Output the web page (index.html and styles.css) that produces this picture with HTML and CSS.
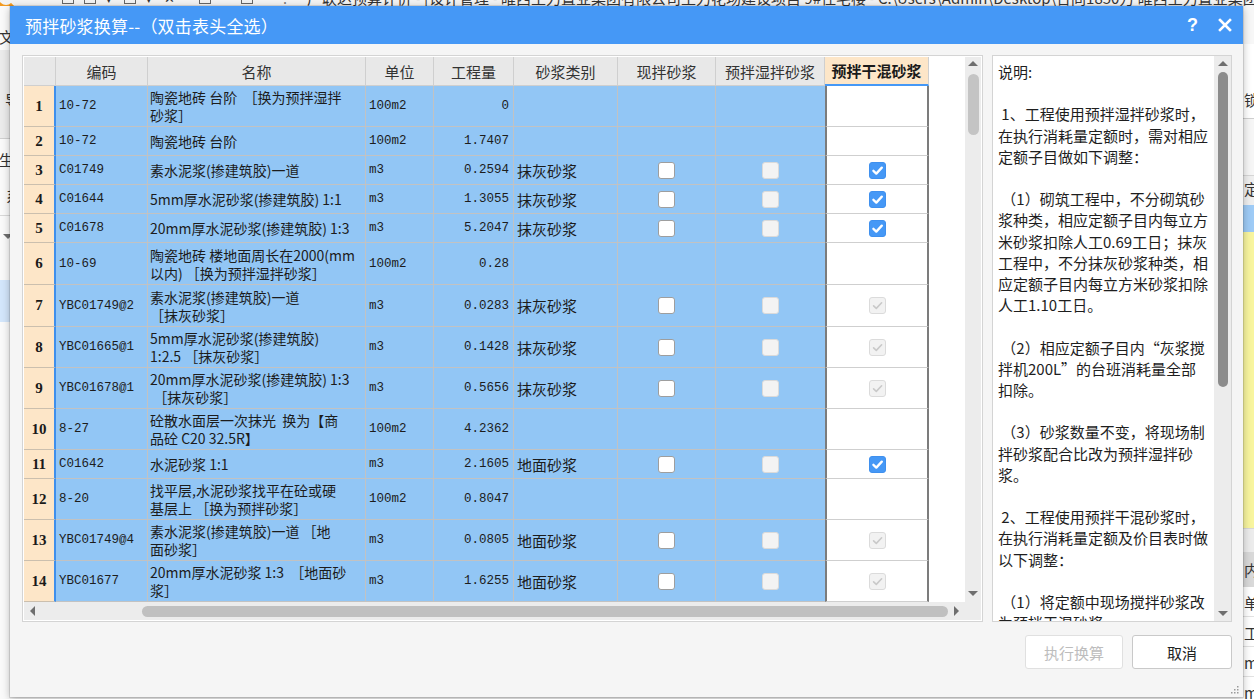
FILE: index.html
```html
<!DOCTYPE html>
<html lang="zh-CN">
<head>
<meta charset="utf-8">
<title>预拌砂浆换算</title>
<link rel="stylesheet" href="styles.css">
</head>
<body>
<div class="app">
  <div class="app-top">
    <span class="logo"></span>
    <span class="tico sq"></span>
    <span class="tico sq"></span><span class="tdrop">▾</span>
    <span class="tico sq"></span><span class="tdrop">▾</span>
    <span class="tx">✕</span>
    <span class="tico sq2"></span>
    <span class="tico sq2"></span>
    <span class="tdots">⁝</span>
    <span class="apptitle">广联达预算计价 - [设计管理 - 睢西生力置业集团有限公司生力花场建设项目 9#住宅楼 - C:\Users\Admin\Desktop\合同1850万 睢西生力置业集团有限公司]</span>
  </div>
  <div class="app-left">
    <div class="al al-a">文</div>
    <div class="al al-b">导</div>
    <div class="al al-c">生</div>
    <div class="al al-d">系</div>
    <div class="al al-e"><span class="tri-down"></span></div>
    <div class="al al-f"></div>
    <div class="al al-g"></div>
  </div>
  <div class="app-right">
    <div class="ar ar-a"></div>
    <div class="ar ar-b">锁</div>
    <div class="ar ar-c"></div>
    <div class="ar ar-d">定</div>
    <div class="ar ar-e"></div>
    <div class="ar ar-f"></div>
    <div class="ar ar-g"></div>
    <div class="ar ar-h">内</div>
    <div class="ar ar-i">单</div>
    <div class="ar ar-i">工</div>
    <div class="ar ar-i">m</div>
    <div class="ar ar-i">m</div>
  </div>
</div>

<div class="dialog">
  <div class="titlebar">
    <span class="title">预拌砂浆换算--（双击表头全选）</span>
    <span class="tb-btns">
      <span class="help">?</span>
      <svg class="close" width="14" height="14" viewBox="0 0 14 14"><path d="M2 2 L12 12 M12 2 L2 12" stroke="#fff" stroke-width="2.6" stroke-linecap="square" fill="none"/></svg>
    </span>
  </div>
  <div class="body">
    <div class="main">
      <div class="gridpanel">
        <div class="grid-top">
          <div class="viewport">
            <div class="rows">
              <div class="row hrow">
                <div class="cell h w-rn"></div>
                <div class="cell h w-code">编码</div>
                <div class="cell h w-name">名称</div>
                <div class="cell h w-unit">单位</div>
                <div class="cell h w-qty">工程量</div>
                <div class="cell h w-type">砂浆类别</div>
                <div class="cell h w-xb">现拌砂浆</div>
                <div class="cell h w-sb">预拌湿拌砂浆</div>
                <div class="cell h w-gh hsel">预拌干混砂浆</div>
              </div>

              <div class="row r2">
                <div class="cell rn">1</div>
                <div class="cell code">10-72</div>
                <div class="cell name"><div class="t">陶瓷地砖 台阶 &nbsp;［换为预拌湿拌<br>砂浆］</div></div>
                <div class="cell unit">100m2</div>
                <div class="cell qty">0</div>
                <div class="cell type"></div>
                <div class="cell xb"></div>
                <div class="cell sb"></div>
                <div class="cell gh"></div>
              </div>

              <div class="row r1">
                <div class="cell rn">2</div>
                <div class="cell code">10-72</div>
                <div class="cell name"><div class="t">陶瓷地砖 台阶</div></div>
                <div class="cell unit">100m2</div>
                <div class="cell qty">1.7407</div>
                <div class="cell type"></div>
                <div class="cell xb"></div>
                <div class="cell sb"></div>
                <div class="cell gh"></div>
              </div>

              <div class="row r1">
                <div class="cell rn">3</div>
                <div class="cell code">C01749</div>
                <div class="cell name"><div class="t">素水泥浆(掺建筑胶)一道</div></div>
                <div class="cell unit">m3</div>
                <div class="cell qty">0.2594</div>
                <div class="cell type">抹灰砂浆</div>
                <div class="cell xb"><span class="cb"></span></div>
                <div class="cell sb"><span class="cb dis"></span></div>
                <div class="cell gh"><span class="cb on"><svg width="15" height="15" viewBox="0 0 15 15"><path d="M3.4 7.8 L6.3 10.6 L11.8 4.6" stroke="#fff" stroke-width="2.3" fill="none" stroke-linecap="round" stroke-linejoin="round"/></svg></span></div>
              </div>

              <div class="row r1">
                <div class="cell rn">4</div>
                <div class="cell code">C01644</div>
                <div class="cell name"><div class="t">5mm厚水泥砂浆(掺建筑胶) 1:1</div></div>
                <div class="cell unit">m3</div>
                <div class="cell qty">1.3055</div>
                <div class="cell type">抹灰砂浆</div>
                <div class="cell xb"><span class="cb"></span></div>
                <div class="cell sb"><span class="cb dis"></span></div>
                <div class="cell gh"><span class="cb on"><svg width="15" height="15" viewBox="0 0 15 15"><path d="M3.4 7.8 L6.3 10.6 L11.8 4.6" stroke="#fff" stroke-width="2.3" fill="none" stroke-linecap="round" stroke-linejoin="round"/></svg></span></div>
              </div>

              <div class="row r1">
                <div class="cell rn">5</div>
                <div class="cell code">C01678</div>
                <div class="cell name"><div class="t">20mm厚水泥砂浆(掺建筑胶) 1:3</div></div>
                <div class="cell unit">m3</div>
                <div class="cell qty">5.2047</div>
                <div class="cell type">抹灰砂浆</div>
                <div class="cell xb"><span class="cb"></span></div>
                <div class="cell sb"><span class="cb dis"></span></div>
                <div class="cell gh"><span class="cb on"><svg width="15" height="15" viewBox="0 0 15 15"><path d="M3.4 7.8 L6.3 10.6 L11.8 4.6" stroke="#fff" stroke-width="2.3" fill="none" stroke-linecap="round" stroke-linejoin="round"/></svg></span></div>
              </div>

              <div class="row r2b">
                <div class="cell rn">6</div>
                <div class="cell code">10-69</div>
                <div class="cell name"><div class="t">陶瓷地砖 楼地面周长在2000(mm<br>以内) ［换为预拌湿拌砂浆］</div></div>
                <div class="cell unit">100m2</div>
                <div class="cell qty">0.28</div>
                <div class="cell type"></div>
                <div class="cell xb"></div>
                <div class="cell sb"></div>
                <div class="cell gh"></div>
              </div>

              <div class="row r2b">
                <div class="cell rn">7</div>
                <div class="cell code">YBC01749@2</div>
                <div class="cell name"><div class="t">素水泥浆(掺建筑胶)一道<br> ［抹灰砂浆］</div></div>
                <div class="cell unit">m3</div>
                <div class="cell qty">0.0283</div>
                <div class="cell type">抹灰砂浆</div>
                <div class="cell xb"><span class="cb"></span></div>
                <div class="cell sb"><span class="cb dis"></span></div>
                <div class="cell gh"><span class="cb ond"><svg width="15" height="15" viewBox="0 0 15 15"><path d="M3.6 7.8 L6.3 10.4 L11.6 4.8" stroke="#c9c9c9" stroke-width="1.6" fill="none" stroke-linecap="round" stroke-linejoin="round"/></svg></span></div>
              </div>

              <div class="row r2">
                <div class="cell rn">8</div>
                <div class="cell code">YBC01665@1</div>
                <div class="cell name"><div class="t">5mm厚水泥砂浆(掺建筑胶)<br>1:2.5 ［抹灰砂浆］</div></div>
                <div class="cell unit">m3</div>
                <div class="cell qty">0.1428</div>
                <div class="cell type">抹灰砂浆</div>
                <div class="cell xb"><span class="cb"></span></div>
                <div class="cell sb"><span class="cb dis"></span></div>
                <div class="cell gh"><span class="cb ond"><svg width="15" height="15" viewBox="0 0 15 15"><path d="M3.6 7.8 L6.3 10.4 L11.6 4.8" stroke="#c9c9c9" stroke-width="1.6" fill="none" stroke-linecap="round" stroke-linejoin="round"/></svg></span></div>
              </div>

              <div class="row r2">
                <div class="cell rn">9</div>
                <div class="cell code">YBC01678@1</div>
                <div class="cell name"><div class="t">20mm厚水泥砂浆(掺建筑胶) 1:3<br> &nbsp;［抹灰砂浆］</div></div>
                <div class="cell unit">m3</div>
                <div class="cell qty">0.5656</div>
                <div class="cell type">抹灰砂浆</div>
                <div class="cell xb"><span class="cb"></span></div>
                <div class="cell sb"><span class="cb dis"></span></div>
                <div class="cell gh"><span class="cb ond"><svg width="15" height="15" viewBox="0 0 15 15"><path d="M3.6 7.8 L6.3 10.4 L11.6 4.8" stroke="#c9c9c9" stroke-width="1.6" fill="none" stroke-linecap="round" stroke-linejoin="round"/></svg></span></div>
              </div>

              <div class="row r2">
                <div class="cell rn">10</div>
                <div class="cell code">8-27</div>
                <div class="cell name"><div class="t">砼散水面层一次抹光 &nbsp;换为【商<br>品砼 C20 32.5R】</div></div>
                <div class="cell unit">100m2</div>
                <div class="cell qty">4.2362</div>
                <div class="cell type"></div>
                <div class="cell xb"></div>
                <div class="cell sb"></div>
                <div class="cell gh"></div>
              </div>

              <div class="row r1">
                <div class="cell rn">11</div>
                <div class="cell code">C01642</div>
                <div class="cell name"><div class="t">水泥砂浆 1:1</div></div>
                <div class="cell unit">m3</div>
                <div class="cell qty">2.1605</div>
                <div class="cell type">地面砂浆</div>
                <div class="cell xb"><span class="cb"></span></div>
                <div class="cell sb"><span class="cb dis"></span></div>
                <div class="cell gh"><span class="cb on"><svg width="15" height="15" viewBox="0 0 15 15"><path d="M3.4 7.8 L6.3 10.6 L11.8 4.6" stroke="#fff" stroke-width="2.3" fill="none" stroke-linecap="round" stroke-linejoin="round"/></svg></span></div>
              </div>

              <div class="row r2">
                <div class="cell rn">12</div>
                <div class="cell code">8-20</div>
                <div class="cell name"><div class="t">找平层,水泥砂浆找平在砼或硬<br>基层上 ［换为预拌砂浆］</div></div>
                <div class="cell unit">100m2</div>
                <div class="cell qty">0.8047</div>
                <div class="cell type"></div>
                <div class="cell xb"></div>
                <div class="cell sb"></div>
                <div class="cell gh"></div>
              </div>

              <div class="row r2">
                <div class="cell rn">13</div>
                <div class="cell code">YBC01749@4</div>
                <div class="cell name"><div class="t">素水泥浆(掺建筑胶)一道 ［地<br>面砂浆］</div></div>
                <div class="cell unit">m3</div>
                <div class="cell qty">0.0805</div>
                <div class="cell type">地面砂浆</div>
                <div class="cell xb"><span class="cb"></span></div>
                <div class="cell sb"><span class="cb dis"></span></div>
                <div class="cell gh"><span class="cb ond"><svg width="15" height="15" viewBox="0 0 15 15"><path d="M3.6 7.8 L6.3 10.4 L11.6 4.8" stroke="#c9c9c9" stroke-width="1.6" fill="none" stroke-linecap="round" stroke-linejoin="round"/></svg></span></div>
              </div>

              <div class="row r2">
                <div class="cell rn">14</div>
                <div class="cell code">YBC01677</div>
                <div class="cell name"><div class="t">20mm厚水泥砂浆 1:3 &nbsp;［地面砂<br>浆］</div></div>
                <div class="cell unit">m3</div>
                <div class="cell qty">1.6255</div>
                <div class="cell type">地面砂浆</div>
                <div class="cell xb"><span class="cb"></span></div>
                <div class="cell sb"><span class="cb dis"></span></div>
                <div class="cell gh"><span class="cb ond"><svg width="15" height="15" viewBox="0 0 15 15"><path d="M3.6 7.8 L6.3 10.4 L11.6 4.8" stroke="#c9c9c9" stroke-width="1.6" fill="none" stroke-linecap="round" stroke-linejoin="round"/></svg></span></div>
              </div>
            </div>
          </div>
          <div class="vscroll">
            <div class="arrow-box ab-v"><span class="tri-up"></span></div>
            <div class="thumb-v"></div>
            <div class="spacer"></div>
            <div class="arrow-box ab-v"><span class="tri-down"></span></div>
          </div>
        </div>
        <div class="grid-bottom">
          <div class="hscroll">
            <div class="arrow-box ab-h"><span class="tri-left"></span></div>
            <div class="thumb-h"></div>
            <div class="arrow-box ab-h"><span class="tri-right"></span></div>
          </div>
          <div class="corner"></div>
        </div>
      </div>

      <div class="desc">
        <div class="desc-text">说明:

 1、工程使用预拌湿拌砂浆时，
在执行消耗量定额时，需对相应
定额子目做如下调整：

 （1）砌筑工程中，不分砌筑砂
浆种类，相应定额子目内每立方
米砂浆扣除人工0.69工日；抹灰
工程中，不分抹灰砂浆种类，相
应定额子目内每立方米砂浆扣除
人工1.10工日。

 （2）相应定额子目内“灰浆搅
拌机200L”的台班消耗量全部
扣除。

 （3）砂浆数量不变，将现场制
拌砂浆配合比改为预拌湿拌砂
浆。

 2、工程使用预拌干混砂浆时，
在执行消耗量定额及价目表时做
以下调整：

 （1）将定额中现场搅拌砂浆改
为预拌干混砂浆。</div>
        <div class="dscroll">
          <div class="arrow-box ab-d"><span class="tri-up"></span></div>
          <div class="thumb-d"></div>
          <div class="spacer"></div>
          <div class="arrow-box ab-d"><span class="tri-down"></span></div>
        </div>
      </div>
    </div>
    <div class="buttons">
      <button class="btn" disabled>执行换算</button>
      <button class="btn">取消</button>
    </div>
  </div>
  <svg class="grip" width="9" height="9" viewBox="0 0 9 9">
    <rect x="7" y="1" width="1.5" height="1.5" fill="#9a9a9a"/>
    <rect x="4" y="4" width="1.5" height="1.5" fill="#9a9a9a"/>
    <rect x="7" y="4" width="1.5" height="1.5" fill="#9a9a9a"/>
    <rect x="1" y="7" width="1.5" height="1.5" fill="#9a9a9a"/>
    <rect x="4" y="7" width="1.5" height="1.5" fill="#9a9a9a"/>
    <rect x="7" y="7" width="1.5" height="1.5" fill="#9a9a9a"/>
  </svg>
</div>
</body>
</html>
```

FILE: styles.css
```css
* { box-sizing: border-box; }
html, body { margin: 0; padding: 0; }
body {
  width: 1254px;
  height: 699px;
  overflow: hidden;
  position: relative;
  background: #f4f4f4;
  font-family: "Noto Sans CJK SC", "Noto Sans", sans-serif;
  color: #222;
}

/* ---------- background application window ---------- */
.app { position: absolute; left: 0; top: 0; right: 0; bottom: 0; background: #f4f4f4; }
.app-top {
  position: absolute; left: 0; right: 0; top: -10px; height: 16px;
  display: flex; align-items: center;
  font-size: 15px; line-height: 16px; color: #333; white-space: nowrap; overflow: hidden;
  background: #f3f3f3;
}
.logo { width: 24px; height: 24px; border-radius: 50%; border: 5px solid #f39a1f; border-right-color: transparent; margin-left: -6px; margin-right: 44px; flex: none; }
.tico { display: inline-block; width: 12px; height: 12px; border: 1.5px solid #666; margin-right: 10px; flex: none; }
.tico.sq2 { margin-right: 30px; }
.tdrop { font-size: 11px; color: #333; margin-right: 12px; }
.tx { font-size: 13px; margin-right: 24px; color: #333; }
.tdots { margin-right: 18px; color: #777; }
.apptitle { margin-left: 2px; }

.app-left {
  position: absolute; left: 0; top: 6px; width: 10px; bottom: 0;
  background: #fafafa; display: flex; flex-direction: column; overflow: hidden;
  font-size: 15px; line-height: 16px; color: #333;
}
.al { flex: none; white-space: nowrap; }
.al-a { height: 44px; padding-top: 23px; margin-left: -1px; }
.al-b { height: 89px; padding-top: 42px; padding-left: 5px; background: #ebebeb; border-bottom: 1px solid #cfcfcf; }
.al-c { height: 40px; padding-top: 13px; margin-left: -1px; }
.al-d { height: 37px; padding-top: 9px; padding-left: 6px; border-bottom: 1px solid #d8d8d8; }
.al-e { height: 40px; display: flex; align-items: center; padding-left: 3px; }
.al-f { height: 24px; }
.al-g { height: 42px; background: #d3e6fb; }

.app-right {
  position: absolute; left: 1243px; right: 0; top: 6px; bottom: 0;
  background: #fff; display: flex; flex-direction: column; overflow: hidden;
  font-size: 15px; line-height: 16px; color: #333;
}
.ar { flex: none; white-space: nowrap; padding-left: 1px; }
.ar-a { height: 38px; background: #f7f7f7; }
.ar-b { height: 75px; padding-top: 48px; border-bottom: 1px solid #cfcfcf; }
.ar-c { height: 57px; background: #f6f6f6; border-bottom: 1px solid #d6d6d6; }
.ar-d { height: 29px; padding-top: 5px; background: #efefef; }
.ar-e { height: 27px; background: #9ecbf6; }
.ar-f { height: 296px; background: #f8f59f; }
.ar-g { height: 24px; background: #ececec; border-top: 1px solid #d8d8d8; }
.ar-h { height: 35px; padding-top: 10px; background: #d9d9d9; }
.ar-i { height: 30px; padding-top: 8px; border-bottom: 1px solid #e2e2e2; }

/* ---------- dialog ---------- */
.dialog {
  position: absolute; left: 10px; top: 6px; width: 1233px; height: 691px;
  background: #f5f5f5;
  box-shadow: 0 0 0 1px rgba(0,0,0,0.10), 0 2px 8px rgba(0,0,0,0.28);
  display: flex; flex-direction: column;
}
.titlebar {
  height: 38px; flex: none; background: #4598f6; color: #fff;
  display: flex; align-items: center; justify-content: space-between;
  padding: 0 11px 0 15px;
}
.title { font-size: 17px; letter-spacing: 0.2px; }
.tb-btns { display: flex; align-items: center; gap: 20px; }
.help { font-family: "Liberation Sans", sans-serif; font-weight: bold; font-size: 18px; line-height: 18px; }
.close { display: block; }

.body { flex: 1; display: flex; flex-direction: column; padding: 11px 11px 0 12px; }
.main { display: flex; gap: 9px; height: 567px; flex: none; }

/* grid panel */
.gridpanel {
  width: 961px; flex: none; border: 1px solid #d4d4d4; padding: 1px;
  background: #fff; display: flex; flex-direction: column;
}
.grid-top { display: flex; height: 545px; flex: none; }
.viewport { width: 941px; flex: none; background: #fff; overflow: hidden; }
.rows { width: 905px; }
.row { display: flex; }
.hrow { height: 29px; }
.r1 { height: 29px; }
.r2 { height: 41px; }
.r2b { height: 42px; }

.cell {
  flex: none; display: flex; align-items: center;
  border-right: 1px solid #c2c2c2; border-bottom: 1px solid #c2c2c2;
  background: #92c6f5; color: #1c1c1c; overflow: hidden;
}
.h {
  background: #e8e8e8; color: #333; justify-content: center;
  font-size: 15px; border-color: #cfcfcf;
}
.hsel { background: #fde6c8; color: #1a1a1a; font-weight: bold; border-bottom: 2px solid #4598f6; }

.w-rn { width: 32px; }
.w-code, .code { width: 92px; }
.w-name, .name { width: 218px; }
.w-unit, .unit { width: 68px; }
.w-qty, .qty { width: 80px; }
.w-type, .type { width: 104px; }
.w-xb, .xb { width: 98px; }
.w-sb, .sb { width: 109px; }
.w-gh, .gh { width: 104px; }

.rn {
  width: 32px; background: #fde6c8; justify-content: center;
  font-family: "Liberation Serif", serif; font-weight: bold; font-size: 15px; color: #1a1a1a;
  border-right: 2px solid #3e8fec; border-bottom-color: #cbbfae;
}
.code, .unit, .qty { font-family: "Liberation Mono", monospace; font-size: 12.5px; padding-left: 3px; }
.qty { justify-content: flex-end; padding-left: 0; padding-right: 4px; }
.name { padding-left: 2px; font-size: 14px; line-height: 18px; white-space: nowrap; }
.type { padding-left: 3px; font-size: 15px; }
.xb, .sb, .gh { justify-content: center; }
.sb { border-right: none; }
.gh { background: #fff; border-left: 2px solid #7c7c7c; border-right: 2px solid #7c7c7c; border-bottom-color: #cfcfcf; }

.cb {
  width: 17px; height: 17px; border-radius: 3px;
  border: 1.5px solid #9e9e9e; background: #fff;
  display: flex; align-items: center; justify-content: center;
}
.cb svg { display: block; }
.cb.dis { background: #f3f3f3; border-color: #dadada; }
.cb.on { background: #4598f6; border-color: #3f90ee; }
.cb.ond { background: #f2f2f2; border-color: #dbdbdb; }

/* scrollbars */
.vscroll { width: 16px; flex: none; background: #ececec; display: flex; flex-direction: column; align-items: center; padding-bottom: 3px; }
.ab-v { height: 12px; }
.thumb-v { width: 11px; height: 61px; margin-top: 5px; border-radius: 6px; background: #c4c4c4; }
.spacer { flex: 1; }
.arrow-box { display: flex; align-items: center; justify-content: center; flex: none; }
.grid-bottom { display: flex; height: 18px; flex: none; }
.hscroll { width: 941px; flex: none; background: #ececec; display: flex; align-items: center; }
.ab-h { width: 16px; height: 18px; }
.thumb-h { width: 806px; height: 11px; margin-left: 102px; border-radius: 6px; background: #c0c0c0; }
.corner { width: 16px; flex: none; background: #ececec; }

.tri-up { width: 0; height: 0; border-left: 5px solid transparent; border-right: 5px solid transparent; border-bottom: 5px solid #6e6e6e; }
.tri-down { width: 0; height: 0; border-left: 5px solid transparent; border-right: 5px solid transparent; border-top: 5px solid #6e6e6e; }
.tri-left { width: 0; height: 0; border-top: 5px solid transparent; border-bottom: 5px solid transparent; border-right: 5px solid #6e6e6e; }
.tri-right { width: 0; height: 0; border-top: 5px solid transparent; border-bottom: 5px solid transparent; border-left: 5px solid #6e6e6e; }

/* description panel */
.desc {
  width: 240px; flex: none; border: 1px solid #d4d4d4; background: #fff;
  display: flex;
}
.desc-text {
  flex: 1; overflow: hidden; padding: 5px 0 0 5px;
  font-size: 15px; line-height: 21.2px; color: #1e1e1e; white-space: pre;
}
.dscroll { width: 17px; flex: none; background: #ececec; display: flex; flex-direction: column; align-items: center; padding-bottom: 1px; }
.ab-d { height: 14px; }
.thumb-d { width: 10px; height: 315px; margin-top: 2px; border-radius: 5px; background: #8c8c8c; }

/* buttons */
.buttons { display: flex; justify-content: flex-end; gap: 9px; margin-top: 13px; }
.btn {
  height: 34px; width: 98px; background: #fff; border: 1px solid #c9c9c9; border-radius: 3px;
  font-family: "Noto Sans CJK SC", sans-serif; font-size: 15px; color: #222; padding: 0;
}
.btn + .btn { width: 100px; }
.btn:disabled { color: #bdbdbd; border-color: #e0e0e0; }

.grip { position: absolute; right: 4px; bottom: 3px; }
```
